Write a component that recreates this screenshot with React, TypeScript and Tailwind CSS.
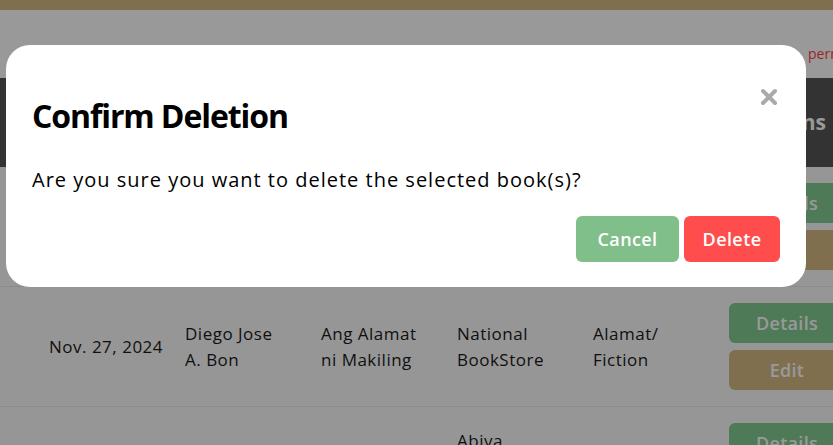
import React from "react";

const font = { fontFamily: '"Open Sans", "Noto Sans", sans-serif' };

function ActionButtons() {
  return (
    <div className="flex flex-col gap-[7px] w-[116px]">
      <div className="h-10 rounded-md bg-[#84cb91] text-white font-semibold text-[18px] tracking-[0.3px] flex items-center justify-center">
        Details
      </div>
      <div className="h-10 rounded-md bg-[#d4b982] text-white font-semibold text-[18px] tracking-[0.3px] flex items-center justify-center">
        Edit
      </div>
    </div>
  );
}

function Row({ cells }: { cells: string[][] }) {
  return (
    <div className="flex items-center py-4 border-b border-[#e6e6e6] bg-[#fafafa] text-[17px] tracking-[0.5px] leading-[26px] font-medium text-[#1a1a1a]">
      <div className="w-[37px] shrink-0" />
      {cells.map((lines, i) => (
        <div key={i} className="w-[136px] shrink-0 px-3">
          {lines.map((l, j) => (
            <div key={j} className="whitespace-nowrap">
              {l}
            </div>
          ))}
        </div>
      ))}
      <div className="px-3 shrink-0">
        <ActionButtons />
      </div>
    </div>
  );
}

export default function App() {
  return (
    <div className="relative w-[833px] h-[445px] overflow-hidden bg-white" style={font}>
      <div className="h-[10px] bg-[#d4b982]" />
      <div className="h-[68px] pt-[33px] pl-[808px] text-[14px] text-[#ff4040] whitespace-nowrap">
        permission required
      </div>
      <div className="h-[89px] bg-[#555555] flex items-center">
        <div className="w-[717px] shrink-0" />
        <div className="px-3 shrink-0 w-[140px] text-white font-bold text-[21px] text-center">
          Actions
        </div>
      </div>
      <Row cells={[[], [], [], [], []]} />
      <Row
        cells={[
          ["Nov. 27, 2024"],
          ["Diego Jose", "A. Bon"],
          ["Ang Alamat", "ni Makiling"],
          ["National", "BookStore"],
          ["Alamat/", "Fiction"],
        ]}
      />
      <Row
        cells={[
          ["Nov. 28, 2024"],
          ["Lualhati", "Bautista"],
          ["Dekada '70"],
          ["Abiva", "Publishing", "House"],
          ["Novel/", "Drama"],
        ]}
      />

      <div className="absolute inset-0 bg-black/40" />

      <div className="absolute left-[6px] top-[45px] w-[800px] h-[242px] bg-white rounded-[24px] px-[26px] pt-[52px] pb-[25px] flex flex-col">
        <div className="flex items-start justify-between">
          <h2 className="text-[32px] leading-[38px] font-bold tracking-[-1.1px] text-black">Confirm Deletion</h2>
          <button className="mt-[-9px] mr-[2px] w-[18px] h-[18px] flex items-center justify-center">
            <svg width="18" height="18" viewBox="0 0 18 18">
              <path d="M3 3 L15 15 M15 3 L3 15" stroke="#aaaaaa" strokeWidth="4" strokeLinecap="round" />
            </svg>
          </button>
        </div>
        <p className="mt-[32px] text-[20px] leading-[26px] font-medium tracking-[1px] text-black">
          Are you sure you want to delete the selected book(s)?
        </p>
        <div className="mt-auto flex justify-end gap-[5px]">
          <button className="w-[103px] h-[46px] rounded-md bg-[#80bf8a] text-white font-semibold text-[18px] tracking-[0.4px]">
            Cancel
          </button>
          <button className="w-[96px] h-[46px] rounded-md bg-[#ff4d4d] text-white font-semibold text-[18px] tracking-[0.4px]">
            Delete
          </button>
        </div>
      </div>
    </div>
  );
}
